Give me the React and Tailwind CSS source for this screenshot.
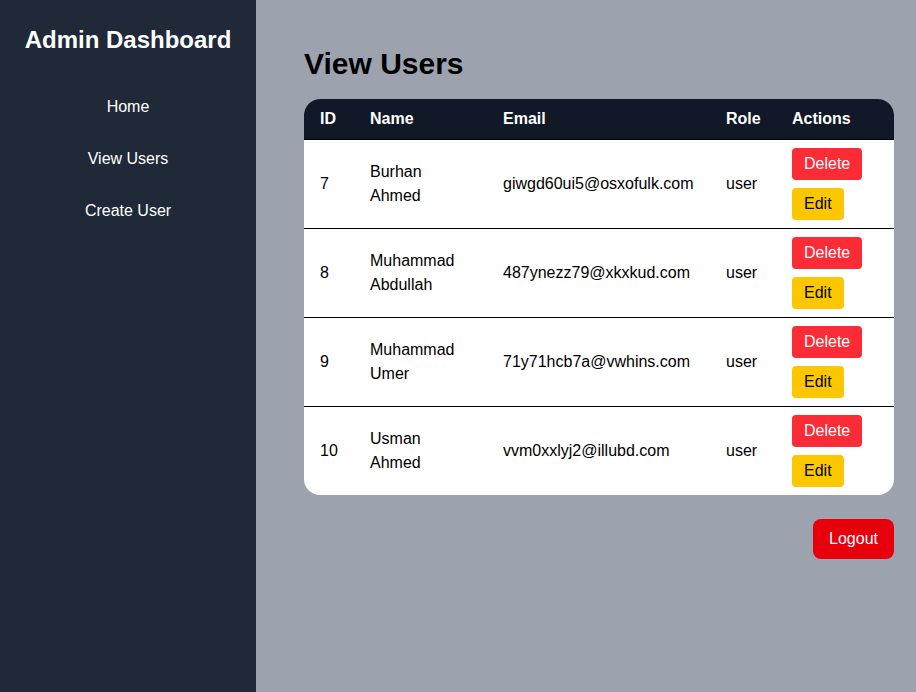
import React from 'react'

const users = [
  { id: 7, name: ['Burhan', 'Ahmed'], email: 'giwgd60ui5@osxofulk.com', role: 'user' },
  { id: 8, name: ['Muhammad', 'Abdullah'], email: '487ynezz79@xkxkud.com', role: 'user' },
  { id: 9, name: ['Muhammad', 'Umer'], email: '71y71hcb7a@vwhins.com', role: 'user' },
  { id: 10, name: ['Usman', 'Ahmed'], email: 'vvm0xxlyj2@illubd.com', role: 'user' },
]

function Sidebar() {
  return (
    <aside className="w-64 shrink-0 bg-[#1f2937] text-white px-6 pt-6">
      <h1 className="text-2xl font-bold text-center leading-8">Admin Dashboard</h1>
      <nav className="mt-[31px]">
        <ul className="flex flex-col gap-3 text-center">
          <li><a href="#" className="block py-2 leading-6">Home</a></li>
          <li><a href="#" className="block py-2 leading-6">View Users</a></li>
          <li><a href="#" className="block py-2 leading-6">Create User</a></li>
        </ul>
      </nav>
    </aside>
  )
}

export default function App() {
  return (
    <div className="flex min-h-screen font-['Liberation_Sans',Arial,sans-serif]">
      <Sidebar />
      <main className="flex-1 bg-[#9ca3af] pl-12 pr-[22px] pt-[46px]">
        <h2 className="text-3xl font-bold leading-9 mb-[17px] text-black">View Users</h2>
        <div className="rounded-2xl overflow-hidden bg-white">
          <table className="w-full table-fixed border-collapse text-black">
            <thead className="bg-[#111827] text-white">
              <tr className="border-b border-black">
                <th className="w-[50px] px-4 h-10 text-left font-bold">ID</th>
                <th className="w-[133px] px-4 h-10 text-left font-bold">Name</th>
                <th className="w-[223px] px-4 h-10 text-left font-bold">Email</th>
                <th className="w-[66px] px-4 h-10 text-left font-bold">Role</th>
                <th className="w-[118px] px-4 h-10 text-left font-bold">Actions</th>
              </tr>
            </thead>
            <tbody>
              {users.map((u, i) => (
                <tr key={u.id} className={i < users.length - 1 ? 'border-b border-black' : ''}>
                  <td className="px-4 py-2 leading-6">{u.id}</td>
                  <td className="px-4 py-2 leading-6">{u.name[0]}<br />{u.name[1]}</td>
                  <td className="px-4 py-2 leading-6">{u.email}</td>
                  <td className="px-4 py-2 leading-6">{u.role}</td>
                  <td className="px-4 py-2">
                    <div className="flex flex-col items-start gap-2">
                      <button className="bg-[#fb2c36] text-white px-3 py-1 leading-6 rounded">Delete</button>
                      <button className="bg-[#fdc700] text-black px-3 py-1 leading-6 rounded">Edit</button>
                    </div>
                  </td>
                </tr>
              ))}
            </tbody>
          </table>
        </div>
        <div className="flex justify-end mt-6">
          <button className="bg-[#e7000b] text-white px-4 py-2 leading-6 rounded-lg">Logout</button>
        </div>
      </main>
    </div>
  )
}
